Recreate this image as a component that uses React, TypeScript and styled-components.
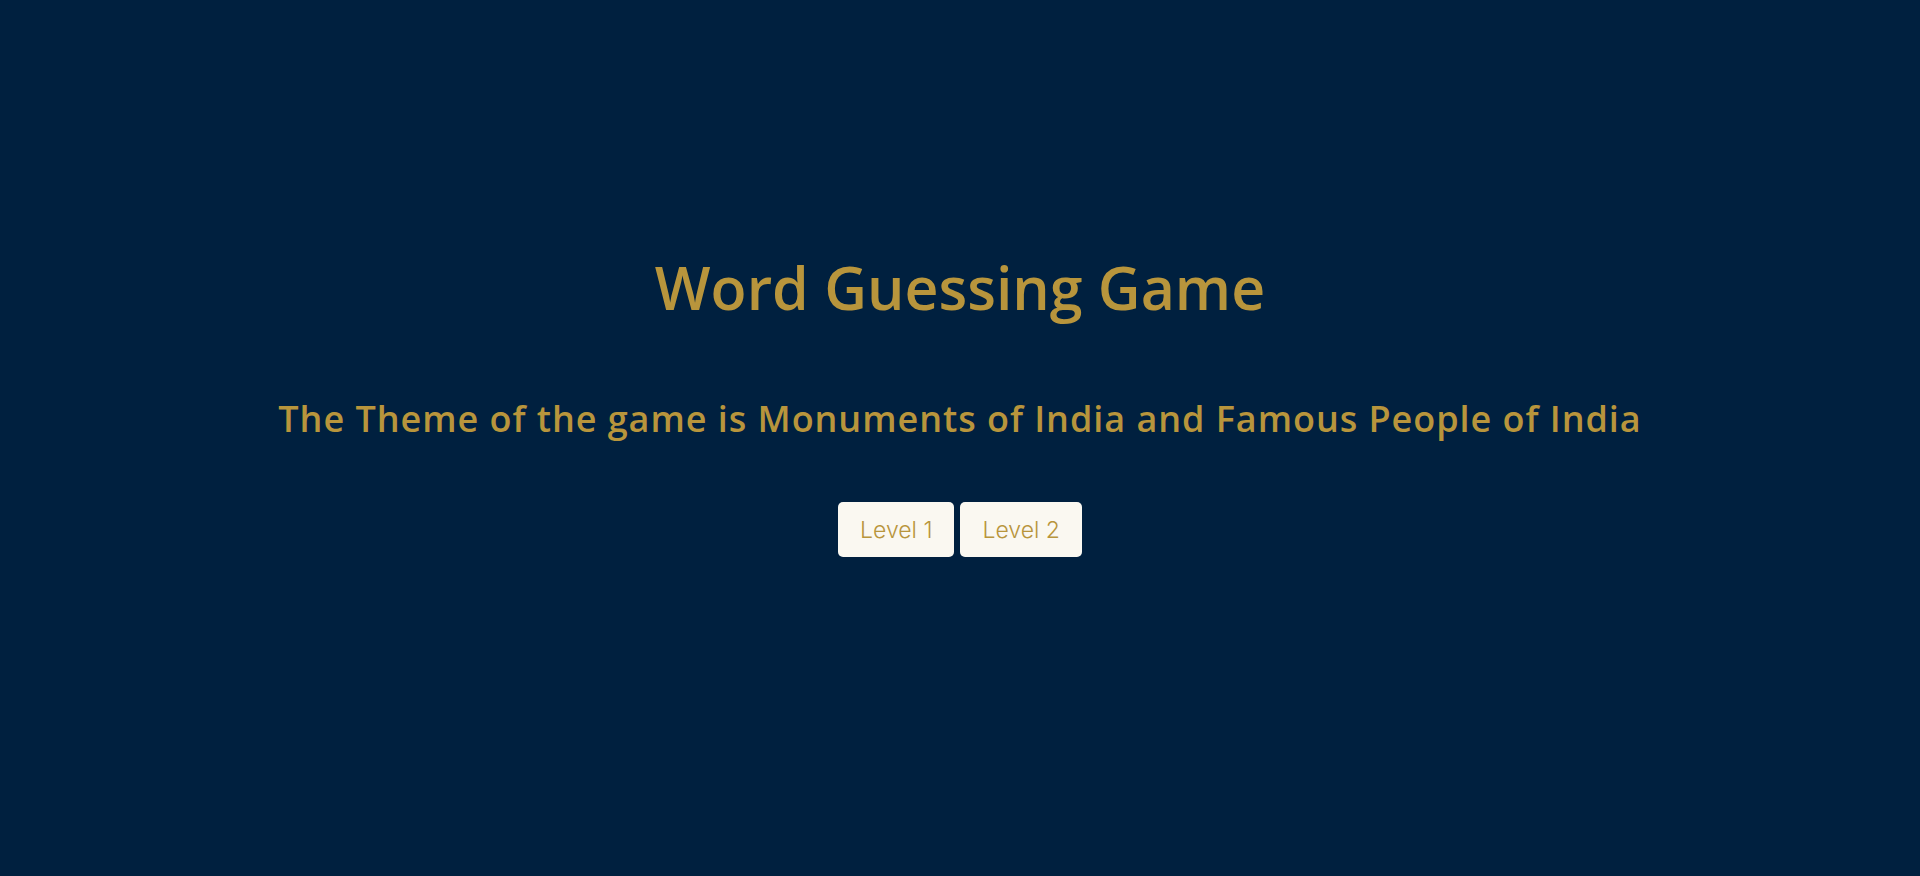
import React from 'react';
import styled, { createGlobalStyle } from 'styled-components';

const GlobalStyle = createGlobalStyle`
    html, body {
        margin: 0;
        padding: 0;
        background: #00203f;
    }
`;

const Page = styled.main`
    min-height: 876px;
    display: flex;
    flex-direction: column;
    align-items: center;
    padding-top: 251px;
    box-sizing: border-box;
    background: #00203f;
    color: #b8953c;
    font-family: 'Open Sans', 'Noto Sans', sans-serif;
`;

const Title = styled.h1`
    margin: 0;
    font-size: 59px;
    font-weight: 600;
    line-height: 72px;
`;

const Subtitle = styled.h2`
    margin: 73px 0 0;
    font-size: 36px;
    font-weight: 600;
    line-height: 46px;
    letter-spacing: 0.95px;
`;

const LevelRow = styled.div`
    display: flex;
    gap: 6px;
    margin-top: 60px;
`;

const LevelButton = styled.button`
    height: 55px;
    padding: 0 22px;
    border: none;
    border-radius: 5px;
    background: #faf8f1;
    color: #b8953c;
    font-family: 'Inter', 'Lato', sans-serif;
    font-size: 23px;
    font-weight: 300;
    cursor: pointer;
`;

const levels = ['Level 1', 'Level 2'];

const App = () => {
    return (
        <>
            <GlobalStyle />
            <Page>
                <Title>Word Guessing Game</Title>
                <Subtitle>The Theme of the game is Monuments of India and Famous People of India</Subtitle>
                <LevelRow>
                    {levels.map(level => (
                        <LevelButton key={level}>{level}</LevelButton>
                    ))}
                </LevelRow>
            </Page>
        </>
    );
};

export default App;
